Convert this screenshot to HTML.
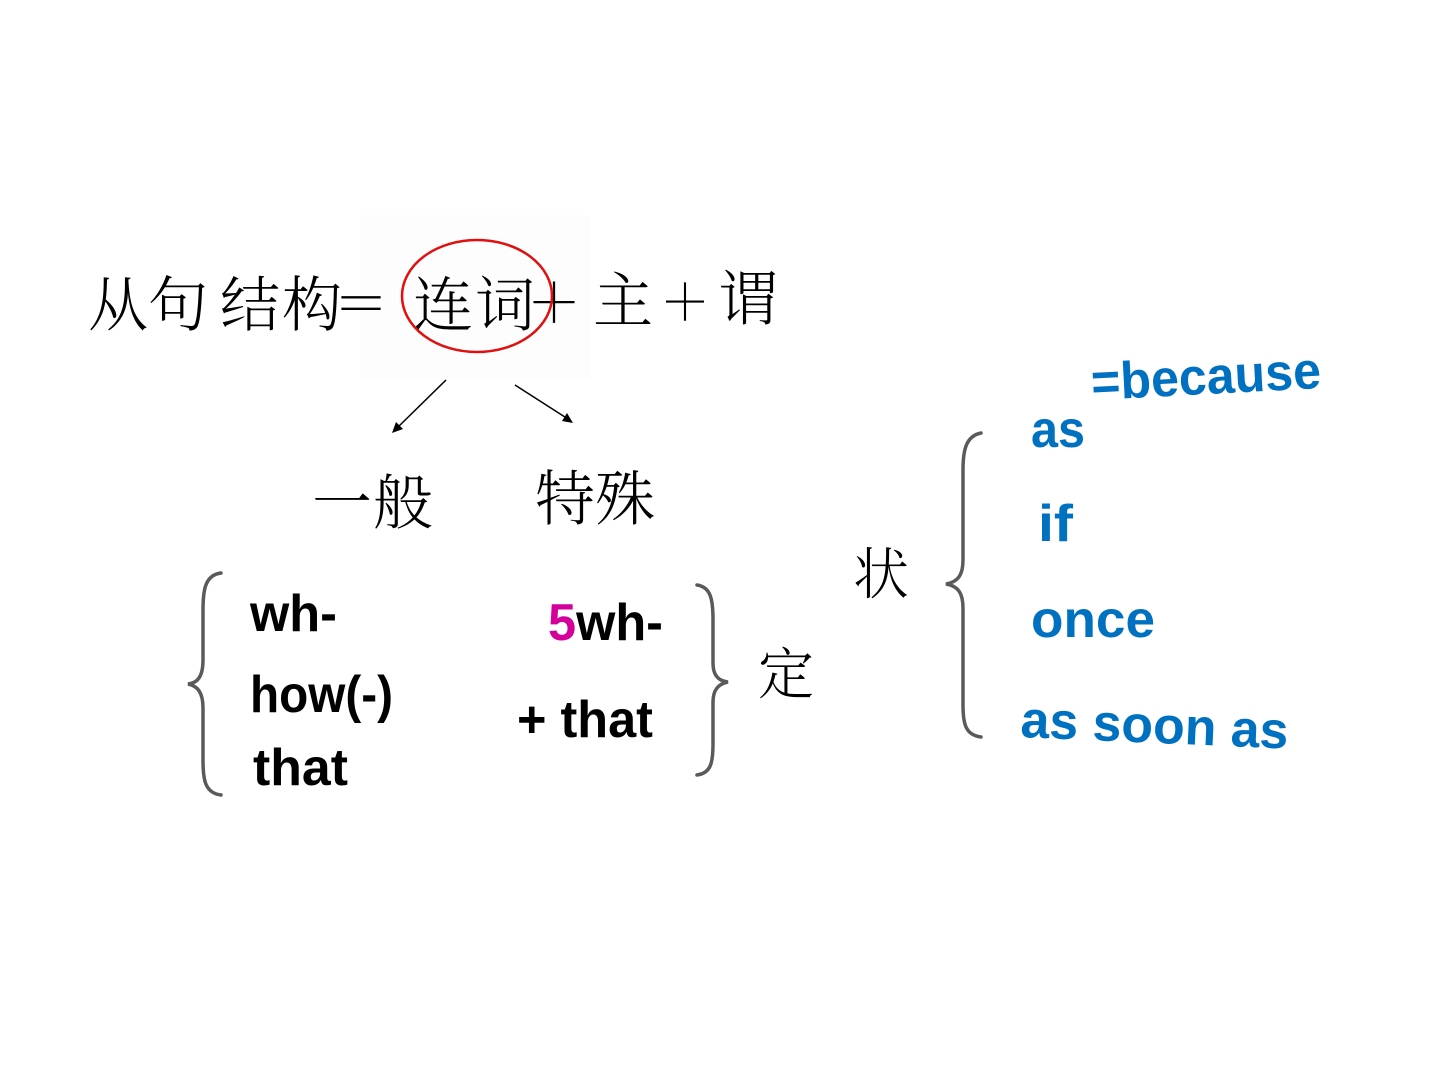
<!DOCTYPE html>
<html><head><meta charset="utf-8"><style>
html,body{margin:0;padding:0;background:#fff;width:1440px;height:1080px;overflow:hidden}
svg{display:block}
.cj{font-family:"Noto Serif CJK SC",serif;font-weight:300;fill:#000}
.en{font-family:"Liberation Sans",sans-serif;font-weight:bold}
</style></head><body>
<svg width="1440" height="1080" viewBox="0 0 1440 1080">
<rect x="360" y="215" width="230" height="165" fill="#fdfdfd"/>
<g class="cj" font-size="60">
<text x="88" y="326">从</text>
<text x="148" y="326">句</text>
<text x="220" y="326">结</text>
<text x="282" y="326">构</text>
<text x="333" y="324" font-size="56" font-weight="200">＝</text>
<text x="413" y="326">连</text>
<text x="475" y="326">词</text>
<text x="527" y="322" font-size="54" font-weight="200">＋</text>
<text x="593" y="322">主</text>
<text x="660" y="320" font-size="50" font-weight="200">＋</text>
<text x="718" y="320">谓</text>
<text x="312" y="524">一</text>
<text x="373" y="524">般</text>
<text x="535" y="520">特</text>
<text x="595" y="520">殊</text>
<text x="758" y="694" font-size="56">定</text>
<text x="853" y="594" font-size="56">状</text>
</g>
<ellipse cx="477" cy="296" rx="75" ry="56" fill="none" stroke="#e01010" stroke-width="2.5"/>
<g stroke="#000" stroke-width="1.5" fill="#000">
<line x1="446" y1="380" x2="396" y2="429"/>
<polygon points="392,433 396,422 403,429" stroke="none"/>
<line x1="515" y1="385" x2="568" y2="419"/>
<polygon points="573,423 562,421 567,413" stroke="none"/>
</g>
<g fill="none" stroke="#5a5a5a" stroke-width="3.5" stroke-linecap="round">
<path d="M221,573 C205,575 203,590 203,610 L203,660 C203,676 198,683 188,684 C198,686 203,693 203,708 L203,760 C203,780 205,793 221,795"/>
<path d="M697,585 C711,587 713,600 713,620 L713,663 C713,675 718,681 728,682 C718,684 713,690 713,702 L713,743 C713,763 711,773 697,775"/>
<path d="M981,433 C966,436 963,450 963,470 L963,560 C963,575 958,582 946,584 C958,586 963,593 963,608 L963,705 C963,725 966,735 981,737"/>
</g>
<g class="en" font-size="52" fill="#000">
<text x="250" y="631" textLength="87" lengthAdjust="spacingAndGlyphs">wh-</text>
<text x="250" y="712" textLength="143" lengthAdjust="spacingAndGlyphs">how(-)</text>
<text x="253" y="785" textLength="95" lengthAdjust="spacingAndGlyphs">that</text>
<text x="548" y="640" textLength="115" lengthAdjust="spacingAndGlyphs"><tspan fill="#d4009a">5</tspan>wh-</text>
<text x="517" y="737" textLength="136" lengthAdjust="spacingAndGlyphs">+ that</text>
</g>
<g class="en" font-size="52" fill="#0070c0">
<text x="1031" y="447" textLength="54" lengthAdjust="spacingAndGlyphs">as</text>
<text x="1038" y="541" textLength="35" lengthAdjust="spacingAndGlyphs">if</text>
<text x="1031" y="637" textLength="124" lengthAdjust="spacingAndGlyphs">once</text>
<text transform="translate(1092,400) rotate(-3)" x="0" y="0" textLength="230" lengthAdjust="spacingAndGlyphs">=because</text>
<text transform="translate(1020,737) rotate(2.5)" x="0" y="0" textLength="268" lengthAdjust="spacingAndGlyphs">as soon as</text>
</g>
</svg>
</body></html>
